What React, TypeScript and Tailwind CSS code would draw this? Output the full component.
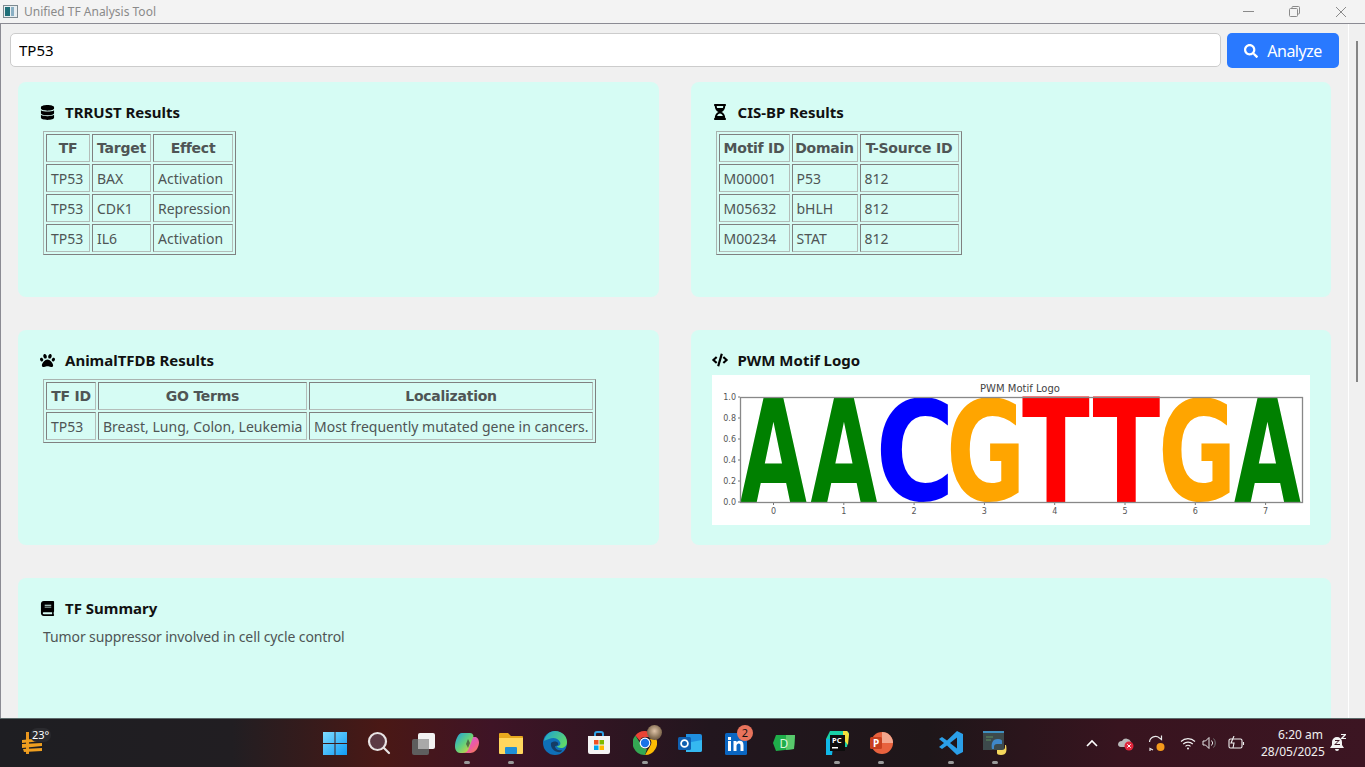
import type { ReactNode } from 'react';
import { FaBook, FaCode, FaDatabase, FaHourglassHalf, FaPaw, FaSearch } from 'react-icons/fa';

const Cell = ({ head, className, children }: { head?: boolean; className?: string; children: ReactNode }) => {
  const Tag = head ? 'th' : 'td';
  return (
    <Tag
      className={`h-[28px] p-0 whitespace-nowrap border border-t-[#808080] border-l-[#808080] border-r-[#b4bdb9] border-b-[#b4bdb9] ${
        head ? "text-center text-[14px] font-bold font-['DejaVu_Sans'] tracking-[-0.25px]" : 'text-left pl-[4px] text-[14px]'
      } ${className ?? ''}`}
    >
      {children}
    </Tag>
  );
};

const DataTable = ({ head, rows, widths }: { head: string[]; rows: string[][]; widths: string[] }) => (
  <table className="ml-[4px] border-separate border-spacing-[2px] border border-t-[#a9b3af] border-l-[#a9b3af] border-r-[#808080] border-b-[#808080] text-[#4f5555]">
    <thead>
      <tr>
        {head.map((h, i) => (
          <Cell head key={h} className={widths[i]}>
            {h}
          </Cell>
        ))}
      </tr>
    </thead>
    <tbody>
      {rows.map((r) => (
        <tr key={r.join()}>
          {r.map((c, i) => (
            <Cell key={i}>{c}</Cell>
          ))}
        </tr>
      ))}
    </tbody>
  </table>
);

const Card = ({ icon, title, children, className }: { icon: ReactNode; title: string; children: ReactNode; className?: string }) => (
  <section className={`rounded-[8px] bg-[#d6fcf4] pl-[21px] pt-[21px] ${className ?? 'h-[215px]'}`}>
    <div className="flex h-[18px] items-center gap-[10px] text-[15px] font-bold text-[#111111] mb-[10px]">
      <span className="flex w-[16px] justify-center text-[#000000]">{icon}</span>
      {title}
    </div>
    {children}
  </section>
);

const letters = [
  { c: 'A', x: 740, sx: 0.6, sy: 1, b: 127, f: '#008000' },
  { c: 'A', x: 810.5, sx: 0.6, sy: 1, b: 127, f: '#008000' },
  { c: 'C', x: 875.6, sx: 0.75, sy: 0.965, b: 125, f: '#0000ff' },
  { c: 'G', x: 946, sx: 0.675, sy: 0.965, b: 125, f: '#ffa500' },
  { c: 'T', x: 1022, sx: 0.69, sy: 1, b: 127, f: '#ff0000' },
  { c: 'T', x: 1092.5, sx: 0.69, sy: 1, b: 127, f: '#ff0000' },
  { c: 'G', x: 1158, sx: 0.665, sy: 0.965, b: 125, f: '#ffa500' },
  { c: 'A', x: 1234, sx: 0.6, sy: 1, b: 127, f: '#008000' },
];

// Chart coordinates are screen coordinates minus the image origin (712, 375).
const MotifLogo = () => (
  <svg viewBox="0 0 598 150" className="h-[150px] w-[598px] bg-white block">
    <text x="308" y="17" textAnchor="middle" fontSize="10" fontFamily="DejaVu Sans" fill="#444">PWM Motif Logo</text>
    {letters.map((l, i) => (
      <text
        key={i}
        transform={`translate(${l.x - 712} ${l.b}) scale(${l.sx} ${l.sy})`}
        fontSize="144"
        fontWeight="700"
        fontFamily="DejaVu Sans"
        fill={l.f}
      >
        {l.c}
      </text>
    ))}
    <rect x="28.5" y="22.5" width="562" height="105" fill="none" stroke="#888" strokeWidth="1.3" />
    {['0.0', '0.2', '0.4', '0.6', '0.8', '1.0'].map((t, i) => (
      <g key={t}>
        <line x1="26" x2="28" y1={127 - i * 21} y2={127 - i * 21} stroke="#777" />
        <text x="24" y={130 - i * 21} textAnchor="end" fontSize="8" fontFamily="DejaVu Sans" fill="#555">{t}</text>
      </g>
    ))}
    {[0, 1, 2, 3, 4, 5, 6, 7].map((t) => (
      <g key={t}>
        <line x1={61.5 + t * 70.3} x2={61.5 + t * 70.3} y1="128" y2="130" stroke="#777" />
        <text x={61.5 + t * 70.3} y="139" textAnchor="middle" fontSize="8" fontFamily="DejaVu Sans" fill="#555">{t}</text>
      </g>
    ))}
  </svg>
);

const Dot = () => <span className="absolute bottom-[3px] left-1/2 h-[3px] w-[6px] -translate-x-1/2 rounded-full bg-[#9a9a9a]" />;

const WindowsIcon = () => (
  <svg width="24" height="24" viewBox="0 0 24 24">
    <defs>
      <linearGradient id="win" x1="0" y1="0" x2="1" y2="1">
        <stop offset="0" stopColor="#7fdcff" />
        <stop offset="1" stopColor="#0f9bf5" />
      </linearGradient>
    </defs>
    <path fill="url(#win)" d="M0 1h11.500v11H0zM12.500 1H24v11H12.500zM0 13h11.500v11H0zM12.500 13H24v11H12.500z" />
  </svg>
);

const task: { key: string; className: string; dot?: boolean; icon: ReactNode }[] = [
  { key: 'start', className: '', icon: <WindowsIcon /> },
  {
    key: 'search',
    className: '',
    icon: (
      <svg width="24" height="24" viewBox="0 0 24 24" fill="#5c3a44" stroke="#e8e4e4" strokeWidth="2.2">
        <circle cx="10.5" cy="10.5" r="8.5" />
        <path d="M17 17l5 5" strokeLinecap="round" />
      </svg>
    ),
  },
  {
    key: 'view',
    className: '',
    icon: (
      <svg width="24" height="24" viewBox="0 0 24 24">
        <rect x="1" y="8" width="17" height="16" rx="2" fill="#5e5e5e" />
        <rect x="7" y="2" width="17" height="16" rx="2" fill="#f2f2f2" />
        <rect x="7" y="8" width="11" height="10" fill="#a9a9a9" />
      </svg>
    ),
  },
  {
    key: 'copilot',
    className: '',
    dot: true,
    icon: (
      <svg width="24" height="24" viewBox="0 0 24 24">
        <defs>
          <linearGradient id="cpa" x1="0" y1="0" x2="1" y2="1">
            <stop offset="0" stopColor="#1f9fe0" />
            <stop offset="0.5" stopColor="#63d17c" />
            <stop offset="1" stopColor="#f8d22e" />
          </linearGradient>
          <linearGradient id="cpb" x1="0" y1="0" x2="1" y2="1">
            <stop offset="0" stopColor="#b56be8" />
            <stop offset="0.6" stopColor="#ee5aa0" />
            <stop offset="1" stopColor="#f78a3a" />
          </linearGradient>
        </defs>
        <path fill="url(#cpb)" d="M17 6h3c2.500 0 4 2.500 4 5.500 0 4-2.500 8-5 9.500-1.500.8-3 1-5 1h-2c-3 0-5-1.500-5.500-4L9 13h5z" />
        <path fill="url(#cpa)" d="M7 2h8c2 0 3 1 3.500 3L14 17c-1 3-3 5-6 5H5c-3 0-5-3-5-6.500C0 10 3 2 7 2z" />
        <path fill="#1d1420" opacity="0.5" d="M13 8l2 4-2 5-2-4z" />
      </svg>
    ),
  },
  {
    key: 'files',
    className: '',
    dot: true,
    icon: (
      <svg width="24" height="24" viewBox="0 0 24 24">
        <path fill="#e8a91e" d="M0 3a1 1 0 011-1h8l3 3h11a1 1 0 011 1v3H0z" />
        <path fill="#ffd75e" d="M0 7h24v15a1 1 0 01-1 1H1a1 1 0 01-1-1z" />
        <rect x="6" y="16" width="12" height="7" rx="1" fill="#1f8fd6" />
      </svg>
    ),
  },
  {
    key: 'edge',
    className: '',
    icon: (
      <svg width="24" height="24" viewBox="0 0 24 24">
        <defs>
          <linearGradient id="edg" x1="0" y1="0" x2="1" y2="0.6">
            <stop offset="0" stopColor="#1aa0d8" />
            <stop offset="1" stopColor="#5fd86a" />
          </linearGradient>
        </defs>
        <circle cx="12" cy="12" r="12" fill="#0f6fb8" />
        <path fill="url(#edg)" d="M1 10C2 4 7 0 12 0c7 0 12 5 12 11 0 4-3 6-6 6-2 0-4-1-4-2 3 0 4-2 3-4-2-4-7-5-11-3-2 .8-4 1.500-5 2z" />
        <path fill="#1c1420" d="M8 12c2-2 6-2 7 0 1 2-1 3-3 3 0 3 3 5 7 4l-1 2c-5 1-11-3-10-9z" opacity="0.55" />
      </svg>
    ),
  },
  {
    key: 'store',
    className: '',
    icon: (
      <svg width="24" height="24" viewBox="0 0 24 24">
        <path d="M8 6V3a2 2 0 012-2h4a2 2 0 012 2v3" fill="none" stroke="#2fa3e6" strokeWidth="2" />
        <path fill="#f4f4f4" d="M1 5h22v16a2 2 0 01-2 2H3a2 2 0 01-2-2z" />
        <path fill="#f25022" d="M7 9h4.500v4.500H7z" />
        <path fill="#7fba00" d="M12.500 9H17v4.500h-4.500z" />
        <path fill="#00a4ef" d="M7 14.500h4.500V19H7z" />
        <path fill="#ffb900" d="M12.500 14.500H17V19h-4.500z" />
      </svg>
    ),
  },
  {
    key: 'chrome',
    className: 'ml-[2px]',
    dot: true,
    icon: (
      <span className="relative block h-[24px] w-[24px]">
        <svg width="24" height="24" viewBox="0 0 24 24">
          <path fill="#ea4335" d="M12 0a12 12 0 0110.400 6H12a6 6 0 00-5.400 3.400L2.400 4.400A12 12 0 0112 0z" />
          <path fill="#fbbc04" d="M22.400 6A12 12 0 0112 24l5.200-9A6 6 0 0017 8z" />
          <path fill="#34a853" d="M2.400 4.400L7 12a6 6 0 007 5.700L12 24A12 12 0 012.400 4.400z" />
          <circle cx="12" cy="12" r="5.400" fill="#fff" />
          <circle cx="12" cy="12" r="4.200" fill="#1a73e8" />
        </svg>
        <span className="absolute -right-[5px] -top-[6px] h-[15px] w-[15px] rounded-full bg-[radial-gradient(circle_at_50%_40%,#e0c4a8_0%,#8a7358_55%,#4a3a30_100%)]" />
      </span>
    ),
  },
  {
    key: 'outlook',
    className: 'ml-[1px]',
    icon: (
      <svg width="24" height="24" viewBox="0 0 24 24">
        <path fill="#1f8fe0" d="M8 3h14a2 2 0 012 2v14a2 2 0 01-2 2H8z" />
        <path fill="#35b8f0" d="M8 12l16-3v10a2 2 0 01-2 2H8z" />
        <rect x="0" y="6" width="13" height="13" rx="1.500" fill="#0f5fb0" />
        <circle cx="6.500" cy="12.500" r="3.400" fill="none" stroke="#fff" strokeWidth="1.800" />
      </svg>
    ),
  },
  {
    key: 'linkedin',
    className: 'ml-[2px]',
    icon: (
      <span className="relative block h-[24px] w-[24px]">
        <svg width="24" height="24" viewBox="0 0 24 24">
          <rect x="1" y="2" width="22" height="22" rx="1.500" fill="#0a66c2" />
          <path fill="#fff" d="M4 10h3v10H4zM4 6h3v3H4zM9.500 10h3v1.500c.7-1.100 1.800-1.700 3.200-1.700 2.500 0 3.800 1.500 3.800 4.400V20h-3v-5.300c0-1.500-.6-2.300-1.800-2.300s-2.200.9-2.200 2.500V20h-3z" />
        </svg>
        <span className="absolute -right-[5px] -top-[6px] flex h-[16px] w-[16px] items-center justify-center rounded-full bg-[#e8735c] text-[11px] text-[#111111]">2</span>
      </span>
    ),
  },
  {
    key: 'dataspell',
    className: 'ml-[4px]',
    icon: (
      <svg width="22" height="18" viewBox="0 0 22 18">
        <path fill="#1fae4a" d="M3 1h19l-1 14-18 2-3-8z" />
        <path fill="#58c96c" d="M13 1h9l-1 14-8 1z" />
        <text x="11" y="14" textAnchor="middle" fontSize="12" fontFamily="Noto Sans" fill="#d8f5dc">D</text>
      </svg>
    ),
  },
  {
    key: 'pycharm',
    className: 'ml-[9px]',
    dot: true,
    icon: (
      <svg width="24" height="24" viewBox="0 0 24 24">
        <path fill="#19d0a6" d="M5 0h17l2 2-2 14H3L1 8z" />
        <path fill="#f4e13c" d="M18 0h4l2 3-1 11-5-6z" />
        <path fill="#10b8e8" d="M1 8h8l-2 16H1z" />
        <rect x="5" y="4" width="15" height="16" fill="#0d0d0d" />
        <text x="7" y="12" fontSize="7.500" fontWeight="700" fontFamily="Noto Sans" fill="#fff">PC</text>
        <rect x="7" y="16" width="6" height="1.500" fill="#fff" />
      </svg>
    ),
  },
  {
    key: 'ppt',
    className: '',
    dot: true,
    icon: (
      <svg width="24" height="24" viewBox="0 0 24 24">
        <circle cx="13" cy="12" r="11" fill="#e8623e" />
        <path fill="#f4a78e" d="M13 1a11 11 0 0111 11H13z" />
        <rect x="1" y="6" width="12" height="12" rx="1.500" fill="#c8401f" />
        <text x="7" y="16" textAnchor="middle" fontSize="10" fontWeight="700" fontFamily="Noto Sans" fill="#fff">P</text>
      </svg>
    ),
  },
  {
    key: 'vscode',
    className: 'ml-[26px]',
    dot: true,
    icon: (
      <svg width="24" height="24" viewBox="0 0 24 24">
        <path fill="#2b9fe8" d="M18 0l6 3v18l-6 3-10-9.500L3 18l-3-2 5-4-5-4 3-2 5 3.500zM18 6.500L11 12l7 5.500z" />
      </svg>
    ),
  },
  {
    key: 'idle',
    className: '',
    dot: true,
    icon: (
      <svg width="24" height="24" viewBox="0 0 24 24">
        <rect x="0" y="0" width="21" height="19" fill="#3d4a4c" />
        <rect x="0" y="0" width="21" height="2" fill="#3f8fc0" />
        <path stroke="#5f8f5f" strokeWidth="1" d="M3 6h7M3 9h5" />
        <path fill="#3f87c8" d="M15 8c3 0 4 1 4 2v3h-5c-2 0-3 1-3 3v2H9c-1-5 0-10 6-10z" />
        <path fill="#f4d65c" d="M18 24c-3 0-4-1-4-2v-3h5c2 0 3-1 3-3v-2h1c1 5 1 10-5 10z" />
      </svg>
    ),
  },
];

const Tray = () => (
  <div className="flex items-center text-[#f0f0f0]">
    <svg width="12" height="8" viewBox="0 0 12 8" fill="none" stroke="#fff" strokeWidth="1.600" className="mr-[19px]">
      <path d="M1 7l5-5 5 5" />
    </svg>
    <svg width="17" height="15" viewBox="0 0 17 15" className="mr-[14px]">
      <path fill="#b9b9b9" d="M1 9a4 4 0 014-4 5 5 0 019 1v5H4a3 3 0 01-3-2z" />
      <circle cx="12" cy="10" r="4.500" fill="#e0263c" />
      <path stroke="#fff" d="M10.300 8.300l3.400 3.400M13.700 8.300l-3.400 3.400" />
    </svg>
    <svg width="18" height="18" viewBox="0 0 18 18" fill="none" stroke="#e8e8e8" strokeWidth="1.200" className="mr-[14px]">
      <path d="M1.500 8a6 6 0 0110-4l2 1.500V1.500M5 16l-3-1.500V17" />
      <circle cx="12.500" cy="13" r="4" fill="#f59a1b" stroke="none" />
    </svg>
    <svg width="16" height="13" viewBox="0 0 16 13" fill="none" stroke="#f0f0f0" strokeWidth="1.100" className="mr-[6px]">
      <path d="M1 4.500a10 10 0 0114 0M3.200 7a7 7 0 019.600 0M5.500 9.300a3.500 3.500 0 015 0" />
      <circle cx="8" cy="11.500" r="1" fill="#f0f0f0" stroke="none" />
    </svg>
    <svg width="16" height="14" viewBox="0 0 16 14" fill="none" stroke="#e8e8e8" strokeWidth="1" className="mr-[10px]">
      <path d="M1 5h2.500L7 1.500v11L3.500 9H1z" />
      <path d="M9.500 4.500a3.500 3.500 0 010 5" />
      <path d="M11.500 2.500a6.500 6.500 0 010 9" stroke="#777" />
    </svg>
    <svg width="17" height="14" viewBox="0 0 17 14" fill="none" stroke="#f0f0f0" strokeWidth="1.100" className="mr-[16px]">
      <rect x="1" y="3" width="13" height="9" rx="1.500" />
      <path d="M15.500 6v3" />
      <path d="M6 0L3 7h3l-1 5" />
    </svg>
    <div className="w-[62px] text-right font-['Noto_Sans'] text-[12px] leading-[15px] mr-[7px] shrink-0">
      <div>6:20 am</div>
      <div className="mt-[2px] whitespace-nowrap">28/05/2025</div>
    </div>
    <svg width="16" height="18" viewBox="0 0 16 18" className="shrink-0">
      <path fill="#f2f2f2" d="M7 3a5 5 0 00-5 5v3l-2 3h14l-2-3V8a5 5 0 00-5-5zM5 15a2 2 0 004 0z" />
      <path fill="#3a1420" d="M5 6h5L6 10h4v1H4l4-4H5z" />
      <path fill="#f2f2f2" d="M11 0h5v1l-3 3h3v1h-5V4l3-3h-3z" />
    </svg>
  </div>
);

export default function App() {
  return (
    <div className="flex h-[767px] w-[1365px] flex-col overflow-hidden bg-[#f0f0f0] font-['Noto_Sans',sans-serif]">
      {/* Title bar */}
      <header className="flex h-[24px] shrink-0 items-center border-b border-[#8b8b93] bg-[#f3f3f3] pl-[3px] text-[12px] text-[#8a8a8a]">
        <svg width="15" height="13" viewBox="0 0 15 13" className="mr-[6px]">
          <rect x="0.500" y="0.500" width="14" height="12" fill="#e8eef0" stroke="#7d8a90" />
          <rect x="2" y="2" width="5" height="9" fill="#1f6f78" />
          <rect x="8" y="2" width="3" height="9" fill="#8ab0c4" />
        </svg>
        Unified TF Analysis Tool
        <div className="ml-auto flex items-center text-[#7a7a7a]">
          <svg width="11" height="11" viewBox="0 0 11 11" stroke="#8a8a8a" fill="none" className="mr-[35px]">
            <path d="M0 5.500h11" />
          </svg>
          <svg width="11" height="11" viewBox="0 0 11 11" stroke="#8a8a8a" fill="none" className="mr-[35px]">
            <rect x="0.500" y="2.500" width="8" height="8" rx="1" />
            <path d="M3 2.500V1.500a1 1 0 011-1h5.500a1 1 0 011 1V7a1 1 0 01-1 1h-1" />
          </svg>
          <svg width="12" height="12" viewBox="0 0 12 12" stroke="#8a8a8a" fill="none" className="mr-[18px]">
            <path d="M1 1l10 10M11 1L1 11" />
          </svg>
        </div>
      </header>

      <div className="flex min-h-0 flex-1 overflow-hidden border-l border-[#8b8b93]">
        <main className="w-[1347px] shrink-0 pl-[9px] pt-[9px]">
          <div className="flex items-start gap-[6px]">
            <input
              readOnly
              value="TP53"
              className="h-[34px] w-[1211px] rounded-[5px] border border-[#cccccc] bg-white pl-[8px] text-[15px] text-black outline-none"
            />
            <button className="flex h-[35px] w-[112px] items-center justify-center gap-[9px] rounded-[5px] bg-[#2979ff] text-[16px] tracking-[-0.5px] text-white">
              <FaSearch className="text-[14px]" />
              Analyze
            </button>
          </div>

          <div className="ml-[8px] mt-[14px] grid w-[1313px] grid-cols-2 gap-x-[32px] gap-y-[33px]">
            <Card icon={<FaDatabase className="text-[15px]" />} title="TRRUST Results">
              <DataTable
                head={['TF', 'Target', 'Effect']}
                widths={['w-[44px]', 'w-[59px]', 'w-[80px]']}
                rows={[
                  ['TP53', 'BAX', 'Activation'],
                  ['TP53', 'CDK1', 'Repression'],
                  ['TP53', 'IL6', 'Activation'],
                ]}
              />
            </Card>
            <Card icon={<FaHourglassHalf className="text-[16px]" />} title="CIS-BP Results">
              <DataTable
                head={['Motif ID', 'Domain', 'T-Source ID']}
                widths={['w-[71px]', 'w-[66px]', 'w-[99px]']}
                rows={[
                  ['M00001', 'P53', '812'],
                  ['M05632', 'bHLH', '812'],
                  ['M00234', 'STAT', '812'],
                ]}
              />
            </Card>
            <Card icon={<FaPaw className="text-[15px]" />} title="AnimalTFDB Results">
              <DataTable
                head={['TF ID', 'GO Terms', 'Localization']}
                widths={['w-[50px]', 'w-[209px]', 'w-[284px]']}
                rows={[['TP53', 'Breast, Lung, Colon, Leukemia', 'Most frequently mutated gene in cancers.']]}
              />
            </Card>
            <Card icon={<FaCode className="text-[16px]" />} title="PWM Motif Logo">
              <div className="-mt-[4px]">
                <MotifLogo />
              </div>
            </Card>
            <Card icon={<FaBook className="text-[15px]" />} title="TF Summary" className="col-span-2 h-[215px]">
              <p className="ml-[4px] -mt-[1px] text-[14px] tracking-[-0.1px] text-[#4f5555]">Tumor suppressor involved in cell cycle control</p>
            </Card>
          </div>
        </main>

        {/* Scrollbar */}
        <div className="flex-1 border-l border-white pl-[7px] pt-[17px]">
          <div className="h-[341px] w-[2px] bg-[#858585]" />
        </div>
      </div>

      {/* Taskbar */}
      <footer className="flex h-[49px] shrink-0 items-center border-t border-[#5c6a6a] bg-[linear-gradient(90deg,#1e1e22_0%,#211e22_17%,#4a1815_28%,#3f1426_36%,#22161e_52%,#1e1619_68%,#38141f_82%,#3c1522_100%)]">
        <div className="relative ml-[22px] w-[291px] shrink-0">
          <svg width="22" height="24" viewBox="0 0 22 24">
            <path fill="#e8961e" d="M4 1h3v22H4z" />
            <path fill="#f0a020" d="M0 9l20-2v3L0 12zM0 13l20-1v3L0 17zM1 18l19-1v3L2 21z" />
          </svg>
          <span className="absolute left-[8px] -top-[3px] rounded-full bg-[#2a2a2e] px-[2px] text-[11px] leading-[14px] text-white">23°</span>
        </div>

        <div className="flex h-full shrink-0 items-center">
          {task.map((t) => (
            <div key={t.key} className={`relative flex h-full w-[44px] shrink-0 items-center justify-center ${t.className}`}>
              {t.icon}
              {t.dot && <Dot />}
            </div>
          ))}
        </div>

        <div className="ml-auto pr-[19px]">
          <Tray />
        </div>
      </footer>
    </div>
  );
}
